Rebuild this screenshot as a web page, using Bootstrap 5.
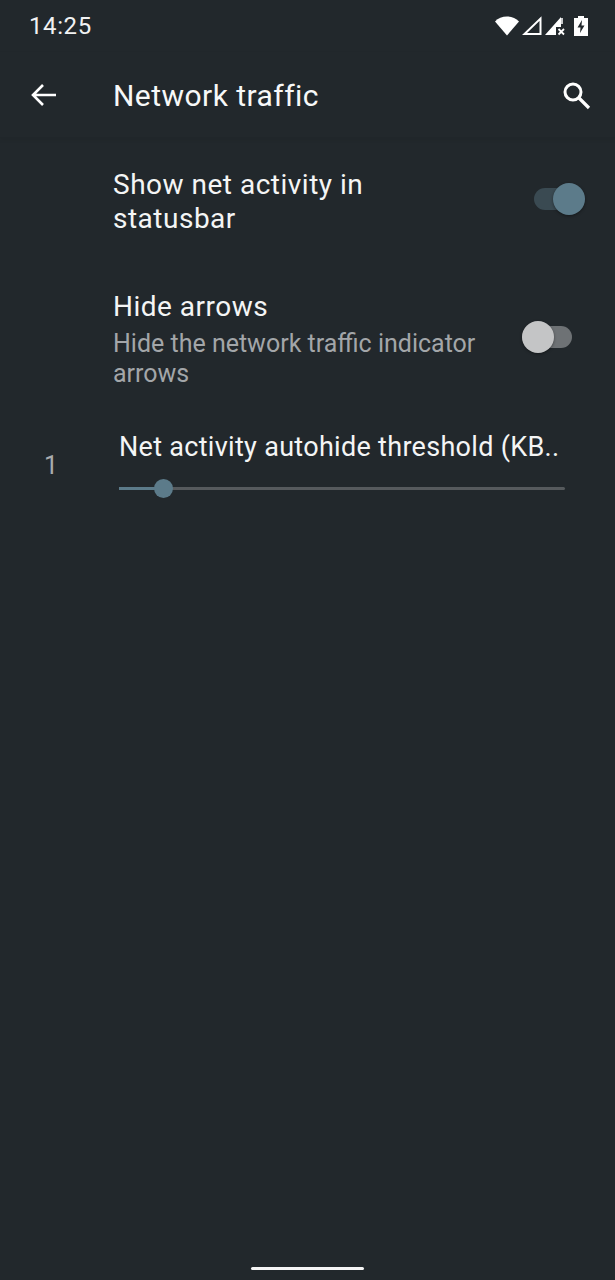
<!DOCTYPE html>
<html lang="en">
<head>
<meta charset="utf-8">
<title>Network traffic</title>
<link href="https://cdn.jsdelivr.net/npm/bootstrap@5.3.0/dist/css/bootstrap.min.css" rel="stylesheet">
<style>
html,body{height:100%;}
body{background:#22282c;color:#fff;font-family:Roboto,"Liberation Sans",sans-serif;overflow:hidden;}
.screen{height:1280px;width:615px;}
.statusrow{height:52px;padding:0 27px 0 29px;}
.clock{font-size:24px;line-height:1;letter-spacing:.6px;color:#f1f2f3;}
.appbar{height:86px;padding:0 24px 0 29px;border-bottom:1px solid #20262a;box-shadow:0 2px 4px rgba(0,0,0,.06);}
.apptitle{font-size:30px;margin:2px 0 0 54px;font-weight:400;line-height:1;letter-spacing:.45px;color:#f7f8f8;}
.pref-a{height:122px;padding:0 31px 0 113px;}
.pref-b{height:154px;padding:0 43px 0 113px;}
.txt-a{padding-top:6px;}
.txt-b{padding-top:5px;}
.pref-title{font-size:28px;line-height:34px;letter-spacing:.5px;color:#f4f5f5;}
.pref-sum{font-size:25px;line-height:30px;margin-top:5px;color:#a3a6a9;}
.swt{position:relative;height:22px;width:50px;border-radius:11px;}
.swt-on{background:#3a4a52;}
.swt-off{background:#6e7275;}
.knob{position:absolute;top:-5px;width:32px;height:32px;border-radius:50%;box-shadow:0 1px 3px rgba(0,0,0,.4);}
.swt-on .knob{right:-1px;background:#5c7b8a;}
.swt-off .knob{left:0;background:#c4c5c6;}
.seek{padding:0 50px 0 44px;margin-top:16px;}
.seek-val{width:75px;font-size:25px;line-height:30px;color:#a9acae;padding-top:21px;}
.seek-title{font-size:27px;line-height:34px;letter-spacing:.3px;color:#f4f5f5;white-space:nowrap;}
.seek-bar{position:relative;height:3px;background:#565a5d;margin-top:23px;width:446px;border-radius:2px;}
.seek-fill{position:absolute;left:0;top:0;height:3px;background:#5c7b8a;}
.seek-knob{position:absolute;top:-8px;width:19px;height:19px;border-radius:50%;background:#5c7b8a;}
.homebar{width:113px;height:3px;background:#f5f5f5;border-radius:2px;}
.homewrap{height:24px;padding-top:11px;}
.icon-gap{gap:3px;}
.batt{margin-left:5px;}
</style>
</head>
<body>
<div class="screen d-flex flex-column">
  <div class="statusrow d-flex align-items-center justify-content-between">
    <span class="clock">14:25</span>
    <div class="d-flex align-items-center icon-gap">
      <svg width="24" height="20" viewBox="0 0 24 20"><path d="M0 5.500C3 2.300 7.300.5 12 .5s9 1.800 12 5L12 19.500z" fill="#fff"/></svg>
      <svg width="20" height="20" viewBox="0 0 20 20"><path d="M18.500 2.500V18H2.500z" fill="none" stroke="#fff" stroke-width="2"/></svg>
      <svg width="21" height="20" viewBox="0 0 21 20"><path d="M0 19 16 1V11H11V19z" fill="#fff"/><path d="M17 2V8" stroke="#fff" stroke-width="1.500"/><path d="M13.500 13l5.500 5.500M19 13l-5.500 5.500" stroke="#fff" stroke-width="1.800"/></svg>
      <svg class="batt" width="14" height="20" viewBox="0 0 14 20"><path d="M4 0h6v2h4v18H0V2h4z" fill="#fff"/><path d="M8 4 3.500 11.500H6.500L6 17 10.500 9.500H7.500z" fill="#22282c"/></svg>
    </div>
  </div>
  <div class="appbar d-flex align-items-center">
    <svg width="30" height="30" viewBox="0 0 30 30"><path d="M27 15H4M14 5 4 15 14 25" fill="none" stroke="#fff" stroke-width="2.600"/></svg>
    <h1 class="apptitle flex-grow-1">Network traffic</h1>
    <svg width="30" height="30" viewBox="0 0 30 30"><circle cx="12" cy="12" r="8" fill="none" stroke="#fff" stroke-width="3"/><path d="M18 18 28 28" stroke="#fff" stroke-width="3.200"/></svg>
  </div>
  <div class="pref-a d-flex align-items-center justify-content-between">
    <div class="pref-title txt-a">Show net activity in<br>statusbar</div>
    <div class="swt swt-on flex-shrink-0"><span class="knob"></span></div>
  </div>
  <div class="pref-b d-flex align-items-center justify-content-between">
    <div class="txt-b">
      <div class="pref-title">Hide arrows</div>
      <div class="pref-sum">Hide the network traffic indicator<br>arrows</div>
    </div>
    <div class="swt swt-off flex-shrink-0"><span class="knob"></span></div>
  </div>
  <div class="seek d-flex">
    <div class="seek-val flex-shrink-0">1</div>
    <div>
      <div class="seek-title">Net activity autohide threshold (KB..</div>
      <div class="seek-bar"><div class="seek-fill" style="width:44px"></div><div class="seek-knob" style="left:35px"></div></div>
    </div>
  </div>
  <div class="flex-grow-1"></div>
  <div class="homewrap d-flex justify-content-center"><div class="homebar"></div></div>
</div>
<script src="https://cdn.jsdelivr.net/npm/bootstrap@5.3.0/dist/js/bootstrap.bundle.min.js"></script>
</body>
</html>
